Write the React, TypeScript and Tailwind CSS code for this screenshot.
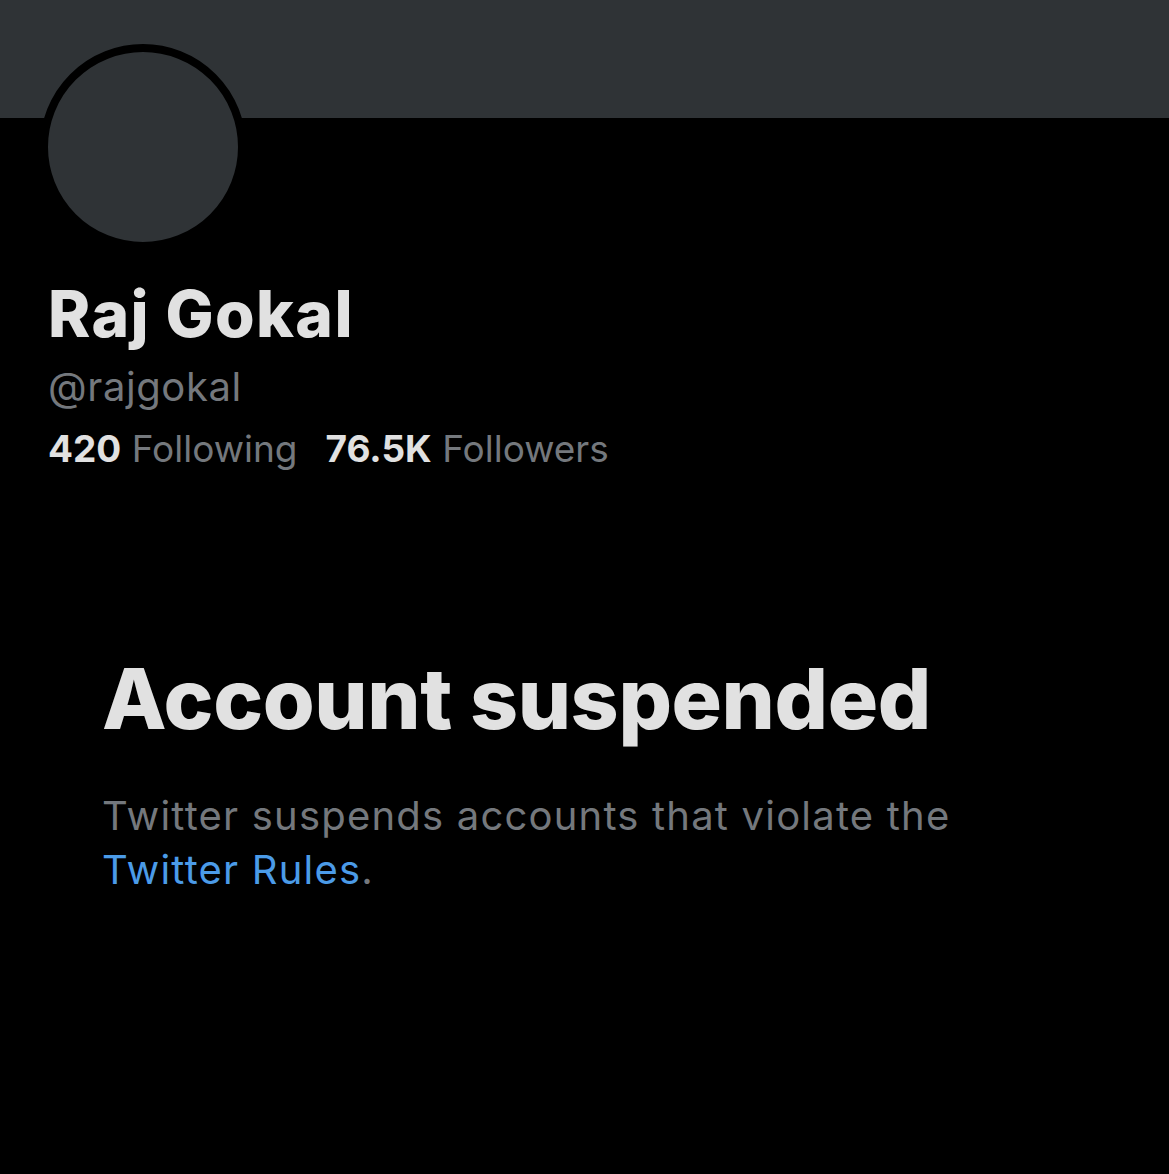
import React from "react";

const font = { fontFamily: "Inter, 'Liberation Sans', sans-serif" };

export default function App() {
  return (
    <main className="min-h-[1174px] w-[1169px] bg-black" style={font}>
      {/* Banner */}
      <div className="h-[118px] bg-[#2f3336]" />

      <div className="px-12">
        {/* Avatar */}
        <div className="-ml-2 -mt-[74px] h-[206px] w-[206px] rounded-full border-8 border-black bg-[#2f3336]" />

        {/* Profile info */}
        <h1 className="mt-[28px] text-[64px] font-extrabold leading-[72px] tracking-[1.4px] text-[#e1e1e1]">
          Raj Gokal
        </h1>
        <p className="mt-[13px] text-[40px] leading-[48px] tracking-[0.6px] text-[#74787d]">@rajgokal</p>
        <div className="mt-[16px] flex gap-[28px] text-[37px] leading-[44px]">
          <span>
            <span className="font-bold text-[#e1e1e1]">420</span>{" "}
            <span className="text-[#74787d]">Following</span>
          </span>
          <span>
            <span className="font-bold text-[#e1e1e1]">76.5K</span>{" "}
            <span className="text-[#74787d]">Followers</span>
          </span>
        </div>

        {/* Suspended notice */}
        <div className="mt-[178px] pl-[54px]">
          <h2 className="text-[84px] font-extrabold leading-[100px] tracking-[-0.4px] text-[#e1e1e1]">
            Account suspended
          </h2>
          <p className="mt-[40px] w-[900px] text-[40px] leading-[54px] tracking-[1.2px] text-[#74787d]">
            Twitter suspends accounts that violate the{" "}
            <a className="text-[#4b9be8]">Twitter Rules</a>.
          </p>
        </div>
      </div>
    </main>
  );
}
